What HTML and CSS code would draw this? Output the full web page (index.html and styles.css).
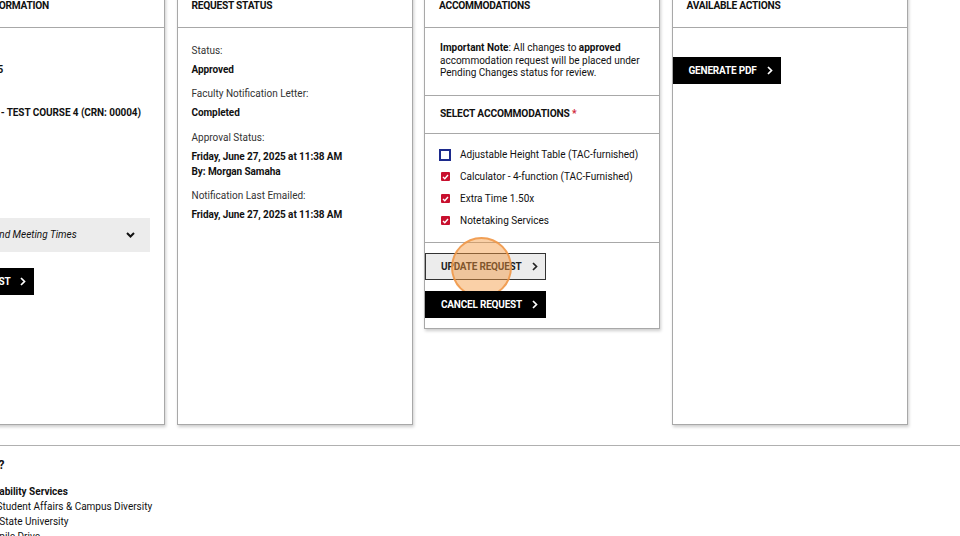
FILE: index.html
```html
<!DOCTYPE html>
<html lang="en">
<head>
  <meta charset="UTF-8" />
  <title>Accommodation Request</title>
  <link rel="stylesheet" href="styles.css">
</head>
<body>
  <div class="page">
    <div class="cards">
      <section class="card">
        <h2 class="card-title">Course Information</h2>
        <div class="card-body">
          <dl class="details">
            <dt>Semester:</dt>
            <dd>Spring I 2025</dd>
            <dt>Course:</dt>
            <dd>TEST 13045 - TEST COURSE 4 (CRN: 00004)</dd>
            <dt>Credits:</dt>
            <dd>3</dd>
            <dt>Instructor:</dt>
            <dd>Staff</dd>
          </dl>
          <div class="accordion">
            <span>Location and Meeting Times</span>
            <svg class="chevron-down" width="9" height="6" viewBox="0 0 9 6"><path d="M1 1l3.5 3.5L8 1" fill="none" stroke="#111" stroke-width="2"/></svg>
          </div>
        </div>
        <div class="card-actions">
          <button class="btn btn-dark">Edit Request <svg class="chevron" width="6" height="9" viewBox="0 0 6 9"><path d="M1 1l3.5 3.5L1 8" fill="none" stroke="currentColor" stroke-width="1.7"/></svg></button>
        </div>
      </section>

      <section class="card">
        <h2 class="card-title">Request Status</h2>
        <div class="card-body">
          <dl class="details">
            <dt>Status:</dt>
            <dd>Approved</dd>
            <dt>Faculty Notification Letter:</dt>
            <dd>Completed</dd>
            <dt>Approval Status:</dt>
            <dd>Friday, June 27, 2025 at 11:38 AM<br>By: Morgan Samaha</dd>
            <dt>Notification Last Emailed:</dt>
            <dd>Friday, June 27, 2025 at 11:38 AM</dd>
          </dl>
        </div>
      </section>

      <div class="column">
        <section class="card">
          <h2 class="card-title">Accommodations</h2>
          <p class="note"><b>Important Note</b>: All changes to <b>approved</b> accommodation request will be placed under Pending Changes status for review.</p>
          <h3 class="section-title">Select Accommodations <span class="required">*</span></h3>
          <ul class="checklist">
            <li><span class="box"></span>Adjustable Height Table (TAC-furnished)</li>
            <li><span class="box checked"><svg width="7" height="6" viewBox="0 0 7 6"><path d="M1 3l1.8 1.8L6 1" fill="none" stroke="#fff" stroke-width="1.4"/></svg></span>Calculator - 4-function (TAC-Furnished)</li>
            <li><span class="box checked"><svg width="7" height="6" viewBox="0 0 7 6"><path d="M1 3l1.8 1.8L6 1" fill="none" stroke="#fff" stroke-width="1.4"/></svg></span>Extra Time 1.50x</li>
            <li><span class="box checked"><svg width="7" height="6" viewBox="0 0 7 6"><path d="M1 3l1.8 1.8L6 1" fill="none" stroke="#fff" stroke-width="1.4"/></svg></span>Notetaking Services</li>
          </ul>
          <div class="card-actions stacked">
            <button class="btn btn-light">Update Request <svg class="chevron" width="6" height="9" viewBox="0 0 6 9"><path d="M1 1l3.5 3.5L1 8" fill="none" stroke="currentColor" stroke-width="1.7"/></svg><span class="click-mark"></span></button>
            <button class="btn btn-dark">Cancel Request <svg class="chevron" width="6" height="9" viewBox="0 0 6 9"><path d="M1 1l3.5 3.5L1 8" fill="none" stroke="currentColor" stroke-width="1.7"/></svg></button>
          </div>
        </section>
      </div>

      <section class="card">
        <h2 class="card-title">Available Actions</h2>
        <div class="card-actions top">
          <button class="btn btn-dark">Generate PDF <svg class="chevron" width="6" height="9" viewBox="0 0 6 9"><path d="M1 1l3.5 3.5L1 8" fill="none" stroke="currentColor" stroke-width="1.7"/></svg></button>
        </div>
      </section>
    </div>

    <footer class="footer">
      <h4>Questions?</h4>
      <p><b>Office of Disability Services</b><br>
        Division for Student Affairs &amp; Campus Diversity<br>
        Washington State University<br>
        1234 N Campile Drive</p>
    </footer>
  </div>
</body>
</html>
```

FILE: styles.css
```css
body {
  margin: 0;
  font-family: Roboto, "Liberation Sans", sans-serif;
  font-size: 10px;
  color: #111;
  background: #fff;
  overflow: hidden;
}
.page {
  margin-left: -71px;
  width: 1100px;
}
.cards {
  display: flex;
  gap: 11.5px;
  margin-top: -16px;
  min-height: 441px;
}
.card {
  width: 236px;
  box-sizing: border-box;
  border: 1px solid #a8a8a8;
  box-shadow: 1px 2px 3px rgba(0, 0, 0, 0.2);
  background: #fff;
}
.column {
  width: 236px;
}
.column .card {
  width: 100%;
}
.card-title {
  margin: 0;
  padding: 14px 14px 15px;
  font-size: 10.2px;
  line-height: 13px;
  font-weight: 700;
  letter-spacing: -0.25px;
  text-transform: uppercase;
  border-bottom: 1px solid #a8a8a8;
}
.card-body {
  padding: 15.5px 14px 0;
}
.details {
  margin: 0;
}
.details dt {
  line-height: 14px;
  margin-bottom: 4px;
  color: #333;
}
.details dd {
  margin: 0 0 10.5px;
  line-height: 15px;
  font-weight: 700;
  letter-spacing: -0.08px;
}
.accordion {
  display: flex;
  align-items: center;
  justify-content: space-between;
  height: 34px;
  padding: 0 15px 0 10px;
  background: #ececec;
  font-style: italic;
}
.card-actions {
  padding-top: 16px;
}
.card-actions.top {
  padding-top: 29px;
}
.card-actions.stacked {
  display: flex;
  flex-direction: column;
  align-items: flex-start;
  gap: 11px;
  padding: 10px 0;
  border-top: 1px solid #a8a8a8;
}
.btn {
  position: relative;
  display: inline-flex;
  align-items: center;
  gap: 10px;
  height: 27px;
  padding: 0 7px 0 15px;
  border: 1px solid #000;
  font-family: inherit;
  font-size: 10px;
  font-weight: 700;
  letter-spacing: -0.2px;
  text-transform: uppercase;
  cursor: pointer;
}
.btn-dark {
  background: #000;
  color: #fff;
}
.btn-light {
  background: #ececec;
  color: #222;
  border-color: #333;
}
.click-mark {
  position: absolute;
  left: 25px;
  top: -17px;
  width: 57px;
  height: 57px;
  border-radius: 50%;
  border: 2px solid rgba(240, 150, 70, 0.85);
  background: rgba(244, 150, 60, 0.45);
}
.note {
  margin: 0;
  padding: 14px 15px 15px;
  line-height: 12.5px;
  border-bottom: 1px solid #a8a8a8;
}
.section-title {
  margin: 0;
  padding: 11px 15px 13px;
  font-size: 10.2px;
  line-height: 13px;
  font-weight: 700;
  letter-spacing: -0.15px;
  text-transform: uppercase;
  border-bottom: 1px solid #a8a8a8;
}
.required {
  color: #d0263a;
}
.checklist {
  list-style: none;
  margin: 0;
  padding: 14px 14px;
  display: flex;
  flex-direction: column;
  gap: 8px;
}
.checklist li {
  display: flex;
  align-items: center;
  gap: 9px;
  line-height: 14px;
}
.box {
  width: 12px;
  height: 12px;
  box-sizing: border-box;
  border: 2px solid #1c2a8c;
  display: flex;
  align-items: center;
  justify-content: center;
}
.box.checked {
  width: 9px;
  height: 9px;
  margin: 0 1.5px;
  border: none;
  border-radius: 1px;
  background: #c8102e;
}
.footer {
  margin-top: 20px;
  border-top: 1px solid #b0b0b0;
  padding: 12px 0 0 15px;
}
.footer h4 {
  margin: 0 0 11.5px;
  font-size: 12px;
  line-height: 14px;
}
.footer p {
  margin: 0;
  line-height: 15px;
}
```
